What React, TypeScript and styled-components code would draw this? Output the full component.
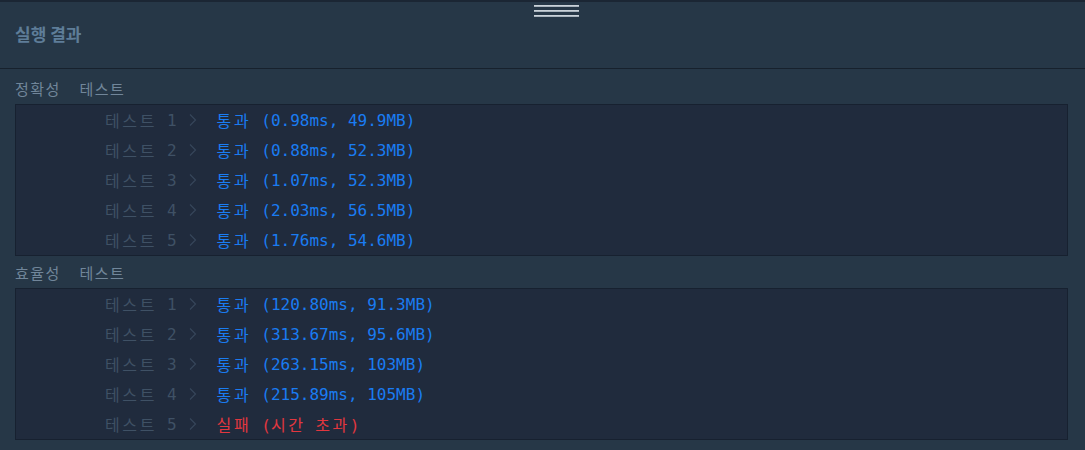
import React from "react";
import styled, { createGlobalStyle } from "styled-components";

const Global = createGlobalStyle`
  html, body { margin: 0; padding: 0; background: #263747; }
  body { width: 1085px; height: 450px; overflow: hidden; }
`;

const Panel = styled.div`
  position: relative;
  width: 1085px;
  height: 450px;
  background: #263747;
  border-top: 2px solid #1b2634;
  box-sizing: border-box;
  font-family: "DejaVu Sans Mono", "Noto Sans CJK KR", monospace;
`;

const Handle = styled.div`
  position: absolute;
  top: 3px;
  left: 534px;
  width: 45px;
  display: flex;
  flex-direction: column;
  gap: 3px;
`;

const HandleBar = styled.span`
  display: block;
  height: 2px;
  background: linear-gradient(#c9d1d8 50%, #a8b3bd 50%);
`;

const Header = styled.header`
  height: 67px;
  box-sizing: border-box;
  border-bottom: 1px solid #17212d;
  display: flex;
  align-items: center;
  padding: 0 15px 4px;
`;

const Title = styled.h2`
  margin: 0;
  font-family: "Noto Sans CJK KR", sans-serif;
  font-size: 17px;
  font-weight: 700;
  color: #5e7d98;
`;

const Content = styled.div`
  padding: 4px 17px 0 15px;
`;

const GroupLabel = styled.div`
  height: 32px;
  display: flex;
  align-items: center;
  gap: 19px;
  font-family: "Noto Sans CJK KR", sans-serif;
  font-size: 15px;
  color: #71869a;
  letter-spacing: 1.4px;
  &:first-child { height: 31px; }
`;

const Box = styled.div`
  background: #202b3d;
  border: 1px solid #172130;
`;

const Row = styled.div`
  height: 30px;
  display: flex;
  align-items: center;
  padding-left: 89px;
  font-size: 16px;
  white-space: pre;
`;

const TestName = styled.span`
  color: #3f5165;
  font-family: "Noto Sans CJK KR", sans-serif;
  letter-spacing: 2.6px;
`;

const Num = styled.span`
  font-family: "DejaVu Sans Mono", monospace;
  color: #3f5165;
  margin-left: 10px;
`;

const Chevron = styled.svg`
  width: 8px;
  height: 12px;
  margin-left: 12px;
  margin-right: 20px;
`;

const Result = styled.span<{ $fail?: boolean }>`
  color: ${(p) => (p.$fail ? "#e2373f" : "#1a7cf2")};
  display: flex;
  align-items: center;
`;

const Status = styled.span`
  font-family: "Noto Sans CJK KR", sans-serif;
  letter-spacing: 2.6px;
  margin-right: 10px;
`;

const Detail = styled.span`
  font-family: "DejaVu Sans Mono", monospace;
`;

const Hangul = styled.span`
  font-family: "Noto Sans CJK KR", sans-serif;
  letter-spacing: 2.6px;
`;

type R = { status: string; detail: string; fail?: boolean };

const accuracy: R[] = [
  { status: "통과", detail: "(0.98ms, 49.9MB)" },
  { status: "통과", detail: "(0.88ms, 52.3MB)" },
  { status: "통과", detail: "(1.07ms, 52.3MB)" },
  { status: "통과", detail: "(2.03ms, 56.5MB)" },
  { status: "통과", detail: "(1.76ms, 54.6MB)" },
];

const efficiency: R[] = [
  { status: "통과", detail: "(120.80ms, 91.3MB)" },
  { status: "통과", detail: "(313.67ms, 95.6MB)" },
  { status: "통과", detail: "(263.15ms, 103MB)" },
  { status: "통과", detail: "(215.89ms, 105MB)" },
  { status: "실패", detail: "(시간 초과)", fail: true },
];

const renderDetail = (text: string) =>
  text.split(/([\uac00-\ud7a3]+)/).map((part, i) =>
    /[\uac00-\ud7a3]/.test(part) ? <Hangul key={i}>{part}</Hangul> : part
  );

const Rows = ({ items }: { items: R[] }) => (
  <Box>
    {items.map((r, i) => (
      <Row key={i}>
        <TestName>테스트</TestName>
        <Num>{i + 1}</Num>
        <Chevron viewBox="0 0 8 12">
          <polyline points="1,0.5 6.5,6 1,11.5" fill="none" stroke="#36465a" strokeWidth="1.2" />
        </Chevron>
        <Result $fail={r.fail}>
          <Status>{r.status}</Status>
          <Detail>{renderDetail(r.detail)}</Detail>
        </Result>
      </Row>
    ))}
  </Box>
);

export default function App() {
  return (
    <>
      <Global />
      <Panel>
        <Handle>
          <HandleBar />
          <HandleBar />
          <HandleBar />
        </Handle>
        <Header>
          <Title>실행 결과</Title>
        </Header>
        <Content>
          <GroupLabel>
            <span>정확성</span>
            <span>테스트</span>
          </GroupLabel>
          <Rows items={accuracy} />
          <GroupLabel>
            <span>효율성</span>
            <span>테스트</span>
          </GroupLabel>
          <Rows items={efficiency} />
        </Content>
      </Panel>
    </>
  );
}
